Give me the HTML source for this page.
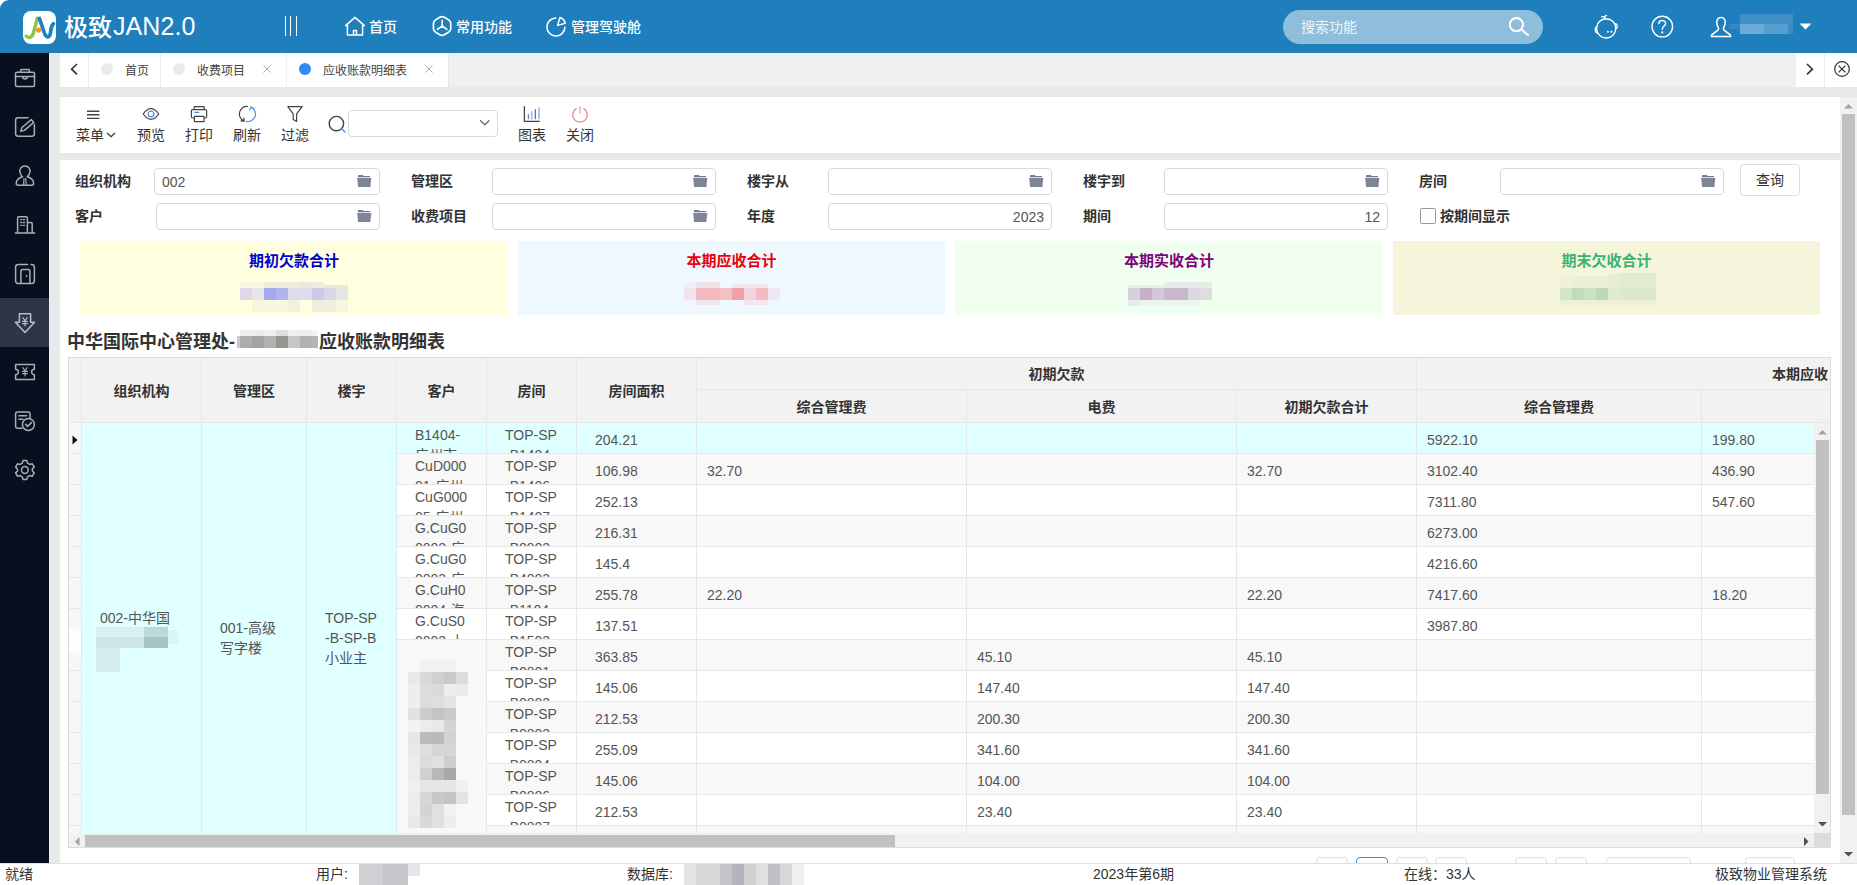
<!DOCTYPE html>
<html lang="zh-CN">
<head>
<meta charset="utf-8">
<title>应收账款明细表</title>
<style>
*{box-sizing:border-box;margin:0;padding:0}
html,body{width:1857px;height:885px;overflow:hidden;background:#fff}
body{font-family:"Liberation Sans","Noto Sans CJK SC",sans-serif;font-size:14px;color:#333;position:relative;line-height:1}
.a{position:absolute}
svg{display:block;overflow:visible}
i{font-style:normal}
/* header */
#hd{left:0;top:0;width:1857px;height:53px;background:#1f7ebc;border-top-left-radius:9px}
#logo{left:23px;top:11px;width:33px;height:33px;background:#fff;border-radius:8px;overflow:hidden}
#brand{left:64px;top:11px;font-size:24px;line-height:32px;color:#fff;white-space:nowrap;font-weight:500}
#brand span{font-size:25px;letter-spacing:.1px;position:relative;top:-1px;margin-left:1px}
.nav{top:0;height:54px;line-height:54px;color:#fff;font-size:14px;white-space:nowrap;font-weight:500}
#srch{left:1283px;top:10px;width:260px;height:34px;border-radius:17px;background:#8fbedd}
#srch span{left:18px;top:0;line-height:34px;font-size:14px;color:#eef5fa}
/* sidebar */
#sb{left:0;top:53px;width:49px;height:810px;background:#08101f}
#sb .act{left:0;top:245px;width:49px;height:49px;background:#2d3648}
#sb svg{position:absolute;left:14px}
/* main bg */
#bg{left:49px;top:53px;width:1808px;height:810px;background:#e8eaea}
#tabrow{left:60px;top:53px;width:1797px;height:34px;background:#f0f0f0}
.tab{top:0;height:34px;background:#fff;border-right:1px solid #eee;font-size:12px;line-height:36px;color:#444;white-space:nowrap}
.dot{top:10px;width:12px;height:12px;border-radius:50%;background:#e8eaec}
/* toolbar */
#tb{left:60px;top:97px;width:1780px;height:56px;background:#fff}
.tbi{top:31px;width:48px;text-align:center;font-size:14px;line-height:14px;color:#333;white-space:nowrap}
/* filter */
#pn{left:60px;top:160px;width:1780px;height:703px;background:#fff;overflow:hidden}
.lb{font-weight:bold;font-size:14px;line-height:20px;color:#333;white-space:nowrap}
.ip{height:27px;border:1px solid #d9d9d9;border-radius:4px;background:#fff;font-size:14px;line-height:27px;color:#555;padding:0 7px}
.fd{position:absolute;right:7px;top:6px}
.sum{top:81px;height:74px;text-align:center}
.sum b{display:block;margin-top:11px;font-size:15px;line-height:18px}
.mz{position:absolute}
/* grid */
#gr{left:8px;top:197px;width:1763px;height:491px;border:1px solid #dcdcdc;background:#fff;overflow:hidden}
.th{background:#f2f2f2;border-right:1px solid #e7e7e7;border-bottom:1px solid #e7e7e7;font-weight:bold;font-size:14px;color:#333;text-align:center;white-space:nowrap;overflow:hidden}
.r{left:0;width:1746px;height:31px;border-bottom:1px solid #e7e7e7}
.c{top:0;height:30px;border-right:1px solid #e7e7e7;font-size:14px;color:#555;overflow:hidden;white-space:nowrap}
.c.n{padding:7px 0 0 10px;line-height:20px}
.c.w{padding:2px 18px 0 18px;line-height:20px;white-space:normal;word-break:break-all;text-align:left}
.mg{background:#e0ffff;border-right:1px solid #d6ecec;font-size:14px;color:#555;line-height:20px;padding:0 18px;word-break:break-all}
.pg{top:697px;height:32px;border:1px solid #dcdee2;border-radius:4px;background:#fff}
/* scrollbars */
.trk{background:#f1f1f1}
.thm{background:#c1c1c1}
/* status */
#st{left:0;top:863px;width:1857px;height:22px;background:#fff;border-top:1px solid #dfe1e4;font-size:14px;line-height:21px;color:#333}
#st span{position:absolute;top:0;white-space:nowrap}
</style>
</head>
<body>
<div id="hd" class="a">
  <div id="logo" class="a"><svg width="33" height="33" viewBox="0 0 33 33" fill="none" stroke-linecap="round" stroke-linejoin="round">
    <path d="M3.2 25.2C6.5 27.6 9.2 26.4 10.6 21.5L14.4 7.2" stroke="#8dc63f" stroke-width="3.5"/>
    <path d="M16.4 7.4L21.2 21.5C22.8 26.4 25.6 27.2 27.2 23.2C28.2 20 27.2 16 30.4 12.8" stroke="#1b82c5" stroke-width="3.7"/>
    <circle cx="15.7" cy="19.1" r="2.6" fill="#f7941d"/>
  </svg></div>
  <div id="brand" class="a">极致<span>JAN2.0</span></div>
  <div class="a" style="left:285px;top:16px;width:1px;height:20px;background:#fff"></div>
  <div class="a" style="left:290px;top:16px;width:1px;height:20px;background:#fff"></div>
  <div class="a" style="left:296px;top:16px;width:1px;height:20px;background:#fff"></div>
  <div id="srch" class="a"></div>
  <svg class="a" style="left:0;top:0" width="1857" height="53" viewBox="0 0 1857 53" fill="none" stroke="#fff" stroke-width="1.5" stroke-linecap="round" stroke-linejoin="round">
    <!-- home -->
    <path d="M345.6 25.6L355 17.4L364.4 25.6M347.4 24.2V35H362.6V24.2M353.5 35V30.4H356.5V35"/>
    <!-- hexagon -->
    <path d="M439.85 17.30Q442.10 16.00 444.35 17.30L448.51 19.70Q450.76 21.00 450.76 23.60L450.76 28.40Q450.76 31.00 448.51 32.30L444.35 34.70Q442.10 36.00 439.85 34.70L435.69 32.30Q433.44 31.00 433.44 28.40L433.44 23.60Q433.44 21.00 435.69 19.70Z" stroke-width="1.7"/>
    <path d="M442.2 26V20.4M442.2 26L437.4 29.4M442.2 26L447 29.4" stroke-width="1.6"/>
    <!-- pie -->
    <path d="M555.8 18A9 9 0 1 0 564.9 27.4" stroke-width="1.6"/>
    <path d="M557.6 25.4L560 17.5A8.4 8.4 0 0 1 565.3 23.2Z" stroke-width="1.5"/>
    <!-- search -->
    <g stroke-width="2"><circle cx="1516.4" cy="24.6" r="6.6"/><path d="M1521.4 29.6L1528 35"/></g>
    <!-- baby -->
    <g stroke-width="1.400"><circle cx="1606.200" cy="28.400" r="9.600"/><path d="M1605.400 18.800C1604.800 17 1603 16.400 1601.600 16.800M1604.400 16.600L1606.400 15.400M1597 26.600C1594.600 27.200 1594.600 32.400 1597.600 33.200M1614.800 23.800C1617.400 23.600 1618.200 27.200 1616 28.600"/></g>
    <circle cx="1607.9" cy="31.8" r="1" fill="#fff" stroke="none"/><circle cx="1611.4" cy="31.8" r="1" fill="#fff" stroke="none"/>
    <!-- help -->
    <circle cx="1662.3" cy="26.6" r="10.3" stroke-width="1.4"/>
    <path d="M1658.9 23.6C1658.9 19.6 1665.6 19.6 1665.6 23.4C1665.6 26 1662.3 26 1662.3 29.2" stroke-width="1.5"/>
    <circle cx="1662.3" cy="32.4" r="1.1" fill="#fff" stroke="none"/>
    <!-- user -->
    <path d="M1721 17.6C1717.6 17.6 1716.4 20.4 1716.8 23.4C1717.2 26 1718.4 27.4 1718.6 28.8C1718.8 31.6 1712 32.4 1711.2 36.4H1730.8C1730 32.4 1723.2 31.6 1723.4 28.8C1723.6 27.4 1724.8 26 1725.2 23.4C1725.6 20.4 1724.4 17.6 1721 17.6Z" stroke-width="1.5"/>
    <path d="M1799.5 23.4H1811.5L1805.5 29.6Z" fill="#fff" stroke="none"/>
  </svg>
  <div class="a nav" style="left:369px">首页</div>
  <div class="a nav" style="left:456px">常用功能</div>
  <div class="a nav" style="left:571px">管理驾驶舱</div>
  <div class="a" style="left:1301px;top:10px;line-height:34px;font-size:14px;color:#eef5fa">搜索功能</div>
  <!-- blurred user name -->
  <i class="mz" style="left:1740px;top:14px;width:53px;height:10px;background:#3f8fc7"></i>
  <i class="mz" style="left:1740px;top:24px;width:24px;height:10px;background:#6babd8"></i>
  <i class="mz" style="left:1764px;top:24px;width:24px;height:10px;background:#559fd1"></i>
  <i class="mz" style="left:1788px;top:24px;width:5px;height:10px;background:#3a8cc5"></i>
  <i class="mz" style="left:1729px;top:24px;width:11px;height:5px;background:#3487c2"></i>
</div>
<div id="sb" class="a"><div class="a act"></div>
<svg style="left:0;top:0" width="49" height="810" viewBox="0 53 49 810" fill="none" stroke="#a9adb5" stroke-width="1.5" stroke-linecap="round" stroke-linejoin="round">
  <!-- briefcase -->
  <rect x="15.5" y="72.2" width="19" height="14.4" rx="1.5"/><path d="M20.6 72V70.6Q20.6 69.6 21.6 69.6H28.4Q29.4 69.6 29.4 70.6V72M15.5 76.4H34.5M22.6 76.6A2.4 2.4 0 0 0 27.4 76.6"/>
  <!-- edit -->
  <path d="M28 117.8H18Q15.6 117.8 15.6 120.2V133.8Q15.6 136.2 18 136.2H32Q34.4 136.2 34.4 133.800V124.500"/>
  <path d="M20.800 131.400L21.800 127.800L31.200 119.600L33.800 122.400L24.400 130.400Z"/>
  <!-- person -->
  <path d="M24.900 166C21.200 166 19.400 169 19.900 172C20.300 174.600 21.800 176.200 22.600 176.800C19.500 177.600 16.400 179.400 16.200 183.200Q16.200 185.200 18 185.200H31.800Q33.600 185.200 33.600 183.200C33.400 179.400 30.300 177.600 27.200 176.800C28 176.200 29.500 174.600 29.900 172C30.400 169 28.600 166 24.900 166Z"/>
  <path d="M24 178.500L23.600 185M25.800 178.500L26.200 185" stroke-width="1.200"/>
  <!-- building -->
  <path d="M15.300 233H34.700M17.600 233V218Q17.600 216.800 18.800 216.800H26.200Q27.400 216.800 27.400 218V233M27.400 222.600H31Q32.200 222.600 32.200 223.800V233"/>
  <path d="M20.700 219.700H21.900M23.400 219.700H24.600M20.700 222.500H21.900M23.400 222.500H24.600M20.700 225.300H21.900M23.400 225.300H24.600" stroke-width="1.300"/>
  <!-- door -->
  <path d="M27.500 264.600H18.200Q15.600 264.600 15.600 267.200V280.800Q15.600 283.400 18.200 283.400H31.800Q34.400 283.400 34.400 280.800V267.200Q34.400 264.600 31.800 264.600H31"/>
  <path d="M20.900 283.400V271.400Q20.900 269.500 22.800 269.500H28Q29.900 269.500 29.900 271.400V283.400"/>
  <circle cx="26.600" cy="276" r=".9" fill="#a9adb5" stroke="none"/>
  <!-- arrow yen (active) -->
  <g stroke="#b9bdc6"><path d="M19.400 313.800H30.600V322.200H34.600L25 332.400L15.400 322.200H19.400Z"/>
  <path d="M22.800 317.600L25 320.600L27.200 317.600M25 320.600V326M22.600 321.400H27.400M22.600 323.600H27.400" stroke-width="1.100"/></g>
  <!-- ticket -->
  <path d="M15.600 364.600H34.400V369.200A2.800 2.800 0 0 0 34.400 374.800V379.400H15.600V374.800A2.800 2.800 0 0 0 15.600 369.200Z"/>
  <path d="M22.800 367.600L25 370.600L27.200 367.600M25 370.600V376M22.600 371.400H27.400M22.600 373.600H27.400" stroke-width="1.100"/>
  <!-- doc check -->
  <path d="M22 428.300H17.600Q15.600 428.300 15.600 426.300V414Q15.600 412 17.600 412H28Q30 412 30 414V417.500M19 415.800H26.600M19 419.200H23"/>
  <circle cx="28.400" cy="424.400" r="6"/><path d="M25.600 424.400L27.600 426.400L31.400 422.600"/>
  <!-- gear -->
  <circle cx="24.900" cy="470" r="3.400"/>
  <path d="M23 460.600H26.800L27.600 463.200L29.600 464.400L32.300 463.800L34.200 467.100L32.300 469.100V471L34.200 472.900L32.300 476.200L29.600 475.600L27.600 476.800L26.800 479.400H23L22.200 476.800L20.200 475.600L17.500 476.200L15.600 472.900L17.500 471V469.100L15.600 467.100L17.500 463.800L20.200 464.400L22.200 463.200Z"/>
</svg>
</div>
<div id="bg" class="a"></div>
<div id="tabrow" class="a">
  <div class="a tab" style="left:0;width:29px"></div>
  <div class="a tab" style="left:29px;width:72px"><i class="a dot" style="left:12px"></i><span class="a" style="left:36px">首页</span></div>
  <div class="a tab" style="left:101px;width:126px"><i class="a dot" style="left:12px"></i><span class="a" style="left:36px">收费项目</span></div>
  <div class="a tab" style="left:227px;width:162px;border-right:1px solid #e4e6e6"><i class="a dot" style="left:12px;background:#2d8cf0"></i><span class="a" style="left:36px">应收账款明细表</span></div>
  <div class="a tab" style="left:1736px;width:29px;border-right:1px solid #eee"></div>
  <div class="a tab" style="left:1765px;width:32px;border-right:0"></div>
  <svg class="a" style="left:0;top:0" width="1797" height="34" viewBox="60 53 1797 34" fill="none" stroke="#333" stroke-width="1.6" stroke-linecap="butt" stroke-linejoin="miter">
    <path d="M77 64L71.600 69.200L77 74.400"/>
    <path d="M1807 64L1812.400 69.200L1807 74.400"/>
    <circle cx="1842" cy="69" r="7.300" stroke-width="1.200"/>
    <path d="M1838.600 65.600L1845.400 72.400M1845.400 65.600L1838.600 72.400" stroke-width="1.200"/>
    <g stroke="#aaa" stroke-width="1"><path d="M263.500 65.500L270.500 72.500M270.500 65.500L263.500 72.500M425.500 65.500L432.500 72.500M432.500 65.500L425.500 72.500"/></g>
  </svg>
</div>
<div id="tb" class="a">
  <div class="a tbi" style="left:10px;width:48px;text-align:left;padding-left:6px">菜单</div>
  <div class="a tbi" style="left:67px">预览</div>
  <div class="a tbi" style="left:115px">打印</div>
  <div class="a tbi" style="left:163px">刷新</div>
  <div class="a tbi" style="left:211px">过滤</div>
  <div class="a" style="left:288px;top:13px;width:150px;height:27px;border:1px solid #d9d9d9;border-radius:4px"></div>
  <div class="a tbi" style="left:448px">图表</div>
  <div class="a tbi" style="left:496px">关闭</div>
  <svg class="a" style="left:0;top:0" width="1780" height="56" viewBox="60 97 1780 56" fill="none" stroke="#444" stroke-width="1.200" stroke-linecap="round" stroke-linejoin="round">
    <path d="M87 111.300H99.400M87 114.800H99.400M87 118.400H99.400" stroke-width="1.400" stroke-linecap="butt"/>
    <path d="M107.400 133.200L111 136.800L114.600 133.200" stroke-width="1.300"/>
    <!-- eye -->
    <path d="M143.200 114C146 110.200 148.600 108.700 151 108.700C153.400 108.700 156 110.200 158.800 114C156 117.800 153.400 119.300 151 119.300C148.600 119.300 146 117.800 143.200 114Z"/>
    <circle cx="151" cy="114" r="2.900" stroke="#4a8fe8"/>
    <!-- printer -->
    <path d="M194.200 109.600V106.600H204.200V109.600M194.400 118H192.600Q191.400 118 191.400 116.800V110.800Q191.400 109.600 192.600 109.600H205.400Q206.600 109.600 206.600 110.800V116.800Q206.600 118 205.400 118H204M194.400 116.400H204V121.600H194.400Z"/>
    <path d="M194.800 112.300H198.800" stroke="#4a8fe8"/>
    <!-- refresh -->
    <path d="M247.600 106.500A7.500 7.500 0 0 0 243.800 120.800M243.800 118L244.200 121.200L241 120.800"/>
    <path d="M246.400 121.400A7.500 7.500 0 0 0 251 107.200M249.600 110L251 106.900L254 108.800" stroke="#4a8fe8"/>
    <!-- filter -->
    <path d="M287.800 106.700H302.200L296.600 113.800V121.400L293.200 119.400V113.800Z"/>
    <!-- search -->
    <circle cx="336.400" cy="123.600" r="7.200" stroke-width="1.400"/>
    <path d="M341.600 128.800L345 132" stroke="#4a8fe8" stroke-width="1.400"/>
    <path d="M480.600 120.800L484.800 124.800L489 120.800" stroke="#666" stroke-width="1.300"/>
    <!-- chart -->
    <path d="M524.400 106.300V121.300H539.800" stroke-width="1.300" stroke-linecap="butt"/>
    <path d="M528.400 114.200V119.200" stroke="#5b85c9" stroke-width="1.300" stroke-linecap="butt"/>
    <path d="M531.800 111.200V119.200" stroke="#8aabe0" stroke-width="1.300" stroke-linecap="butt"/>
    <path d="M535.400 109.200V119.200" stroke="#4c78be" stroke-width="1.300" stroke-linecap="butt"/>
    <path d="M539 107.400V119.200" stroke="#8db4f0" stroke-width="1.500" stroke-linecap="butt"/>
    <!-- power -->
    <path d="M576.200 108.600A7.300 7.300 0 1 0 583.800 108.600" stroke="#ea8a8a" stroke-width="1.300"/>
    <path d="M580 106.300V113.600" stroke="#f0adad" stroke-width="1.500" stroke-linecap="butt"/>
  </svg>
</div>
<div id="pn" class="a">
<div class="a lb" style="left:15px;top:11px">组织机构</div>
<div class="a lb" style="left:351px;top:11px">管理区</div>
<div class="a lb" style="left:687px;top:11px">楼宇从</div>
<div class="a lb" style="left:1023px;top:11px">楼宇到</div>
<div class="a lb" style="left:1359px;top:11px">房间</div>
<div class="a lb" style="left:15px;top:46px">客户</div>
<div class="a lb" style="left:351px;top:46px">收费项目</div>
<div class="a lb" style="left:687px;top:46px">年度</div>
<div class="a lb" style="left:1023px;top:46px">期间</div>
<div class="a ip" style="left:94px;top:8px;width:226px">002<svg class="fd" width="15" height="13" viewBox="0 0 15 13"><path d="M1 0.700Q1 0.100 1.600 0.100H5.500Q6.100 0.100 6.300 0.600L6.600 1.100H12.600Q13.200 1.100 13.200 1.700V2.300H1Z" fill="#767a8c"/><path d="M0.200 3.100H14.300L13.400 12.100H1.100Z" fill="#7f8598"/></svg></div>
<div class="a ip" style="left:432px;top:8px;width:224px"><svg class="fd" width="15" height="13" viewBox="0 0 15 13"><path d="M1 0.700Q1 0.100 1.600 0.100H5.500Q6.100 0.100 6.300 0.600L6.600 1.100H12.600Q13.200 1.100 13.200 1.700V2.300H1Z" fill="#767a8c"/><path d="M0.200 3.100H14.300L13.400 12.100H1.100Z" fill="#7f8598"/></svg></div>
<div class="a ip" style="left:768px;top:8px;width:224px"><svg class="fd" width="15" height="13" viewBox="0 0 15 13"><path d="M1 0.700Q1 0.100 1.600 0.100H5.500Q6.100 0.100 6.300 0.600L6.600 1.100H12.600Q13.200 1.100 13.200 1.700V2.300H1Z" fill="#767a8c"/><path d="M0.200 3.100H14.300L13.400 12.100H1.100Z" fill="#7f8598"/></svg></div>
<div class="a ip" style="left:1104px;top:8px;width:224px"><svg class="fd" width="15" height="13" viewBox="0 0 15 13"><path d="M1 0.700Q1 0.100 1.600 0.100H5.500Q6.100 0.100 6.300 0.600L6.600 1.100H12.600Q13.200 1.100 13.200 1.700V2.300H1Z" fill="#767a8c"/><path d="M0.200 3.100H14.300L13.400 12.100H1.100Z" fill="#7f8598"/></svg></div>
<div class="a ip" style="left:1440px;top:8px;width:224px"><svg class="fd" width="15" height="13" viewBox="0 0 15 13"><path d="M1 0.700Q1 0.100 1.600 0.100H5.500Q6.100 0.100 6.300 0.600L6.600 1.100H12.600Q13.200 1.100 13.200 1.700V2.300H1Z" fill="#767a8c"/><path d="M0.200 3.100H14.300L13.400 12.100H1.100Z" fill="#7f8598"/></svg></div>
<div class="a ip" style="left:96px;top:43px;width:224px"><svg class="fd" width="15" height="13" viewBox="0 0 15 13"><path d="M1 0.700Q1 0.100 1.600 0.100H5.500Q6.100 0.100 6.300 0.600L6.600 1.100H12.600Q13.200 1.100 13.200 1.700V2.300H1Z" fill="#767a8c"/><path d="M0.200 3.100H14.300L13.400 12.100H1.100Z" fill="#7f8598"/></svg></div>
<div class="a ip" style="left:432px;top:43px;width:224px"><svg class="fd" width="15" height="13" viewBox="0 0 15 13"><path d="M1 0.700Q1 0.100 1.600 0.100H5.500Q6.100 0.100 6.300 0.600L6.600 1.100H12.600Q13.200 1.100 13.200 1.700V2.300H1Z" fill="#767a8c"/><path d="M0.200 3.100H14.300L13.400 12.100H1.100Z" fill="#7f8598"/></svg></div>
<div class="a ip" style="left:768px;top:43px;width:224px;text-align:right">2023</div>
<div class="a ip" style="left:1104px;top:43px;width:224px;text-align:right">12</div>
<div class="a" style="left:1360px;top:48px;width:16px;height:16px;border:1px solid #999;border-radius:2px;background:#fff"></div>
<div class="a lb" style="left:1380px;top:46px">按期间显示</div>
<div class="a" style="left:1680px;top:4px;width:60px;height:32px;border:1px solid #dcdee2;border-radius:4px;text-align:center;line-height:30px;font-size:14px;color:#333">查询</div>
<div class="a sum" style="left:20px;width:428px;background:#ffffe0"><b style="color:#0000cd">期初欠款合计</b></div>
<div class="a sum" style="left:458px;width:427px;background:#f0f8ff"><b style="color:#e8000c">本期应收合计</b></div>
<div class="a sum" style="left:895px;width:428px;background:#f0fff0"><b style="color:#800080">本期实收合计</b></div>
<div class="a sum" style="left:1333px;width:427px;background:#f5f5dc"><b style="color:#3cb371">期末欠收合计</b></div>
<i class="mz" style="left:180px;top:128px;width:12px;height:12px;background:#e0d8ea"></i>
<i class="mz" style="left:192px;top:128px;width:12px;height:12px;background:#e6e6e8"></i>
<i class="mz" style="left:204px;top:128px;width:12px;height:12px;background:#a4a8ec"></i>
<i class="mz" style="left:216px;top:128px;width:12px;height:12px;background:#b4b4ec"></i>
<i class="mz" style="left:228px;top:128px;width:12px;height:12px;background:#dcdcea"></i>
<i class="mz" style="left:240px;top:128px;width:12px;height:12px;background:#dcdcea"></i>
<i class="mz" style="left:252px;top:128px;width:12px;height:12px;background:#cacaea"></i>
<i class="mz" style="left:264px;top:128px;width:12px;height:12px;background:#d8d8ea"></i>
<i class="mz" style="left:276px;top:128px;width:12px;height:12px;background:#e4e6e6"></i>
<i class="mz" style="left:180px;top:122px;width:24px;height:6px;background:#f8f8e0"></i>
<i class="mz" style="left:204px;top:122px;width:36px;height:6px;background:#eeeedc"></i>
<i class="mz" style="left:240px;top:122px;width:12px;height:6px;background:#e8e8e0"></i>
<i class="mz" style="left:252px;top:122px;width:12px;height:6px;background:#eeeedc"></i>
<i class="mz" style="left:264px;top:125px;width:24px;height:3px;background:#e8e8dc"></i>
<i class="mz" style="left:192px;top:140px;width:12px;height:12px;background:#f4f6de"></i>
<i class="mz" style="left:204px;top:140px;width:24px;height:12px;background:#f8f8de"></i>
<i class="mz" style="left:228px;top:140px;width:12px;height:12px;background:#f0f2dc"></i>
<i class="mz" style="left:252px;top:140px;width:24px;height:12px;background:#eeeedc"></i>
<i class="mz" style="left:276px;top:140px;width:12px;height:12px;background:#f6f6de"></i>
<i class="mz" style="left:624px;top:128px;width:12px;height:12px;background:#f2e4ea"></i>
<i class="mz" style="left:636px;top:128px;width:12px;height:12px;background:#f4b8c0"></i>
<i class="mz" style="left:648px;top:128px;width:12px;height:12px;background:#f4b8c0"></i>
<i class="mz" style="left:660px;top:128px;width:12px;height:12px;background:#f4c0c6"></i>
<i class="mz" style="left:672px;top:128px;width:12px;height:12px;background:#f4a0a8"></i>
<i class="mz" style="left:684px;top:128px;width:12px;height:12px;background:#f2d4dc"></i>
<i class="mz" style="left:696px;top:128px;width:12px;height:12px;background:#f2bcc0"></i>
<i class="mz" style="left:708px;top:128px;width:12px;height:12px;background:#eee8f4"></i>
<i class="mz" style="left:624px;top:122px;width:12px;height:6px;background:#f2ecf4"></i>
<i class="mz" style="left:636px;top:122px;width:24px;height:6px;background:#f0e4ea"></i>
<i class="mz" style="left:672px;top:124px;width:36px;height:4px;background:#f2e6ea"></i>
<i class="mz" style="left:636px;top:140px;width:24px;height:5px;background:#eee8f0"></i>
<i class="mz" style="left:684px;top:140px;width:24px;height:5px;background:#f0e8ee"></i>
<i class="mz" style="left:1068px;top:128px;width:12px;height:12px;background:#d8d0dc"></i>
<i class="mz" style="left:1080px;top:128px;width:12px;height:12px;background:#c8b0c8"></i>
<i class="mz" style="left:1092px;top:128px;width:12px;height:12px;background:#d4c8d8"></i>
<i class="mz" style="left:1104px;top:128px;width:12px;height:12px;background:#ccb8cc"></i>
<i class="mz" style="left:1116px;top:128px;width:12px;height:12px;background:#c8b8cc"></i>
<i class="mz" style="left:1128px;top:128px;width:12px;height:12px;background:#dcd8e0"></i>
<i class="mz" style="left:1140px;top:128px;width:12px;height:12px;background:#e0dce0"></i>
<i class="mz" style="left:1104px;top:122px;width:48px;height:6px;background:#e8ece8"></i>
<i class="mz" style="left:1068px;top:125px;width:36px;height:3px;background:#e8eee8"></i>
<i class="mz" style="left:1068px;top:140px;width:12px;height:6px;background:#e8ece8"></i>
<i class="mz" style="left:1080px;top:140px;width:60px;height:6px;background:#ecf4ec"></i>
<i class="mz" style="left:1500px;top:128px;width:12px;height:12px;background:#d4e6c8"></i>
<i class="mz" style="left:1512px;top:128px;width:12px;height:12px;background:#c0dcbc"></i>
<i class="mz" style="left:1524px;top:128px;width:12px;height:12px;background:#cce2c4"></i>
<i class="mz" style="left:1536px;top:128px;width:12px;height:12px;background:#bcdab8"></i>
<i class="mz" style="left:1548px;top:128px;width:12px;height:12px;background:#e0eacc"></i>
<i class="mz" style="left:1560px;top:128px;width:12px;height:12px;background:#dce8cc"></i>
<i class="mz" style="left:1572px;top:128px;width:12px;height:12px;background:#dce8cc"></i>
<i class="mz" style="left:1584px;top:128px;width:12px;height:12px;background:#dce8cc"></i>
<i class="mz" style="left:1500px;top:116px;width:12px;height:12px;background:#f0f2d8"></i>
<i class="mz" style="left:1512px;top:116px;width:36px;height:12px;background:#eaf0d4"></i>
<i class="mz" style="left:1548px;top:114px;width:12px;height:14px;background:#e8eed2"></i>
<i class="mz" style="left:1560px;top:113px;width:36px;height:15px;background:#e2ebd1"></i>
<i class="mz" style="left:1500px;top:140px;width:96px;height:5px;background:#eef0d6"></i>

<div class="a" style="left:7px;top:170px;font-size:18px;line-height:24px;font-weight:bold;color:#333;white-space:nowrap">中华国际中心管理处-<span style="display:inline-block;width:84px"></span>应收账款明细表</div>
<i class="mz" style="left:177px;top:176px;width:3px;height:12px;background:#cacace"></i>
<i class="mz" style="left:180px;top:176px;width:12px;height:12px;background:#acacac"></i>
<i class="mz" style="left:192px;top:176px;width:12px;height:12px;background:#a4a2a2"></i>
<i class="mz" style="left:204px;top:176px;width:12px;height:12px;background:#b2b2b6"></i>
<i class="mz" style="left:216px;top:176px;width:12px;height:12px;background:#989490"></i>
<i class="mz" style="left:228px;top:176px;width:12px;height:12px;background:#c8c6c2"></i>
<i class="mz" style="left:240px;top:176px;width:12px;height:12px;background:#b2b2b4"></i>
<i class="mz" style="left:252px;top:176px;width:6px;height:12px;background:#b6b6ba"></i>
<i class="mz" style="left:180px;top:170px;width:12px;height:6px;background:#ededed"></i>
<i class="mz" style="left:192px;top:170px;width:12px;height:6px;background:#ebebeb"></i>
<i class="mz" style="left:204px;top:170px;width:12px;height:6px;background:#efefef"></i>
<i class="mz" style="left:216px;top:170px;width:12px;height:6px;background:#e0dfde"></i>
<i class="mz" style="left:228px;top:170px;width:12px;height:6px;background:#efefef"></i>
<i class="mz" style="left:240px;top:170px;width:12px;height:6px;background:#ecedee"></i>
<i class="mz" style="left:252px;top:170px;width:6px;height:6px;background:#f4f4f4"></i>

<div id="gr" class="a">
<div class="a th" style="left:0px;top:0px;width:13px;height:65px;line-height:66px"></div>
<div class="a th" style="left:13px;top:0px;width:120px;height:65px;line-height:66px">组织机构</div>
<div class="a th" style="left:133px;top:0px;width:105px;height:65px;line-height:66px">管理区</div>
<div class="a th" style="left:238px;top:0px;width:90px;height:65px;line-height:66px">楼宇</div>
<div class="a th" style="left:328px;top:0px;width:90px;height:65px;line-height:66px">客户</div>
<div class="a th" style="left:418px;top:0px;width:90px;height:65px;line-height:66px">房间</div>
<div class="a th" style="left:508px;top:0px;width:120px;height:65px;line-height:66px">房间面积</div>
<div class="a th" style="left:628px;top:0px;width:720px;height:32px;line-height:33px">初期欠款</div>
<div class="a th" style="left:628px;top:32px;width:270px;height:33px;line-height:34px">综合管理费</div>
<div class="a th" style="left:898px;top:32px;width:270px;height:33px;line-height:34px">电费</div>
<div class="a th" style="left:1168px;top:32px;width:180px;height:33px;line-height:34px">初期欠款合计</div>
<div class="a th" style="left:1348px;top:0px;width:414px;height:32px;line-height:33px"></div>
<div class="a th" style="left:1348px;top:32px;width:285px;height:33px;line-height:34px">综合管理费</div>
<div class="a th" style="left:1633px;top:32px;width:129px;height:33px;line-height:34px"></div>
<div class="a" style="left:1703px;top:0;height:32px;line-height:33px;font-weight:bold;font-size:14px;color:#333;white-space:nowrap">本期应收</div>
<div class="a r" style="top:65px;background:#e0ffff">
<div class="a c" style="left:0;width:13px;background:#f7f7f7"></div>
<div class="a c w" style="left:328px;width:90px">B1404-广州市</div>
<div class="a c w" style="left:418px;width:90px">TOP-SP-B1404</div>
<div class="a c n" style="left:508px;width:120px;padding-left:18px">204.21</div>
<div class="a c n" style="left:628px;width:270px;padding-left:10px"></div>
<div class="a c n" style="left:898px;width:270px;padding-left:10px"></div>
<div class="a c n" style="left:1168px;width:180px;padding-left:10px"></div>
<div class="a c n" style="left:1348px;width:285px;padding-left:10px">5922.10</div>
<div class="a c n" style="left:1633px;width:113px;padding-left:10px;border-right:0">199.80</div>
</div>
<div class="a r" style="top:96px;background:#f8f8f8">
<div class="a c" style="left:0;width:13px;background:#f7f7f7"></div>
<div class="a c w" style="left:328px;width:90px">CuD00001-广州</div>
<div class="a c w" style="left:418px;width:90px">TOP-SP-B1406</div>
<div class="a c n" style="left:508px;width:120px;padding-left:18px">106.98</div>
<div class="a c n" style="left:628px;width:270px;padding-left:10px">32.70</div>
<div class="a c n" style="left:898px;width:270px;padding-left:10px"></div>
<div class="a c n" style="left:1168px;width:180px;padding-left:10px">32.70</div>
<div class="a c n" style="left:1348px;width:285px;padding-left:10px">3102.40</div>
<div class="a c n" style="left:1633px;width:113px;padding-left:10px;border-right:0">436.90</div>
</div>
<div class="a r" style="top:127px;background:#fff">
<div class="a c" style="left:0;width:13px;background:#f7f7f7"></div>
<div class="a c w" style="left:328px;width:90px">CuG00005-广州</div>
<div class="a c w" style="left:418px;width:90px">TOP-SP-B1407</div>
<div class="a c n" style="left:508px;width:120px;padding-left:18px">252.13</div>
<div class="a c n" style="left:628px;width:270px;padding-left:10px"></div>
<div class="a c n" style="left:898px;width:270px;padding-left:10px"></div>
<div class="a c n" style="left:1168px;width:180px;padding-left:10px"></div>
<div class="a c n" style="left:1348px;width:285px;padding-left:10px">7311.80</div>
<div class="a c n" style="left:1633px;width:113px;padding-left:10px;border-right:0">547.60</div>
</div>
<div class="a r" style="top:158px;background:#f8f8f8">
<div class="a c" style="left:0;width:13px;background:#f7f7f7"></div>
<div class="a c w" style="left:328px;width:90px">G.CuG00002-广</div>
<div class="a c w" style="left:418px;width:90px">TOP-SP-B0903</div>
<div class="a c n" style="left:508px;width:120px;padding-left:18px">216.31</div>
<div class="a c n" style="left:628px;width:270px;padding-left:10px"></div>
<div class="a c n" style="left:898px;width:270px;padding-left:10px"></div>
<div class="a c n" style="left:1168px;width:180px;padding-left:10px"></div>
<div class="a c n" style="left:1348px;width:285px;padding-left:10px">6273.00</div>
<div class="a c n" style="left:1633px;width:113px;padding-left:10px;border-right:0"></div>
</div>
<div class="a r" style="top:189px;background:#fff">
<div class="a c" style="left:0;width:13px;background:#f7f7f7"></div>
<div class="a c w" style="left:328px;width:90px">G.CuG00003-广</div>
<div class="a c w" style="left:418px;width:90px">TOP-SP-B4003</div>
<div class="a c n" style="left:508px;width:120px;padding-left:18px">145.4</div>
<div class="a c n" style="left:628px;width:270px;padding-left:10px"></div>
<div class="a c n" style="left:898px;width:270px;padding-left:10px"></div>
<div class="a c n" style="left:1168px;width:180px;padding-left:10px"></div>
<div class="a c n" style="left:1348px;width:285px;padding-left:10px">4216.60</div>
<div class="a c n" style="left:1633px;width:113px;padding-left:10px;border-right:0"></div>
</div>
<div class="a r" style="top:220px;background:#f8f8f8">
<div class="a c" style="left:0;width:13px;background:#f7f7f7"></div>
<div class="a c w" style="left:328px;width:90px">G.CuH00004-海</div>
<div class="a c w" style="left:418px;width:90px">TOP-SP-B1104</div>
<div class="a c n" style="left:508px;width:120px;padding-left:18px">255.78</div>
<div class="a c n" style="left:628px;width:270px;padding-left:10px">22.20</div>
<div class="a c n" style="left:898px;width:270px;padding-left:10px"></div>
<div class="a c n" style="left:1168px;width:180px;padding-left:10px">22.20</div>
<div class="a c n" style="left:1348px;width:285px;padding-left:10px">7417.60</div>
<div class="a c n" style="left:1633px;width:113px;padding-left:10px;border-right:0">18.20</div>
</div>
<div class="a r" style="top:251px;background:#fff">
<div class="a c" style="left:0;width:13px;background:#f7f7f7"></div>
<div class="a c w" style="left:328px;width:90px">G.CuS00003-上</div>
<div class="a c w" style="left:418px;width:90px">TOP-SP-B1503</div>
<div class="a c n" style="left:508px;width:120px;padding-left:18px">137.51</div>
<div class="a c n" style="left:628px;width:270px;padding-left:10px"></div>
<div class="a c n" style="left:898px;width:270px;padding-left:10px"></div>
<div class="a c n" style="left:1168px;width:180px;padding-left:10px"></div>
<div class="a c n" style="left:1348px;width:285px;padding-left:10px">3987.80</div>
<div class="a c n" style="left:1633px;width:113px;padding-left:10px;border-right:0"></div>
</div>
<div class="a r" style="top:282px;background:#f8f8f8">
<div class="a c" style="left:0;width:13px;background:#f7f7f7"></div>
<div class="a c w" style="left:418px;width:90px">TOP-SP-B0801</div>
<div class="a c n" style="left:508px;width:120px;padding-left:18px">363.85</div>
<div class="a c n" style="left:628px;width:270px;padding-left:10px"></div>
<div class="a c n" style="left:898px;width:270px;padding-left:10px">45.10</div>
<div class="a c n" style="left:1168px;width:180px;padding-left:10px">45.10</div>
<div class="a c n" style="left:1348px;width:285px;padding-left:10px"></div>
<div class="a c n" style="left:1633px;width:113px;padding-left:10px;border-right:0"></div>
</div>
<div class="a r" style="top:313px;background:#fff">
<div class="a c" style="left:0;width:13px;background:#f7f7f7"></div>
<div class="a c w" style="left:418px;width:90px">TOP-SP-B0802</div>
<div class="a c n" style="left:508px;width:120px;padding-left:18px">145.06</div>
<div class="a c n" style="left:628px;width:270px;padding-left:10px"></div>
<div class="a c n" style="left:898px;width:270px;padding-left:10px">147.40</div>
<div class="a c n" style="left:1168px;width:180px;padding-left:10px">147.40</div>
<div class="a c n" style="left:1348px;width:285px;padding-left:10px"></div>
<div class="a c n" style="left:1633px;width:113px;padding-left:10px;border-right:0"></div>
</div>
<div class="a r" style="top:344px;background:#f8f8f8">
<div class="a c" style="left:0;width:13px;background:#f7f7f7"></div>
<div class="a c w" style="left:418px;width:90px">TOP-SP-B0803</div>
<div class="a c n" style="left:508px;width:120px;padding-left:18px">212.53</div>
<div class="a c n" style="left:628px;width:270px;padding-left:10px"></div>
<div class="a c n" style="left:898px;width:270px;padding-left:10px">200.30</div>
<div class="a c n" style="left:1168px;width:180px;padding-left:10px">200.30</div>
<div class="a c n" style="left:1348px;width:285px;padding-left:10px"></div>
<div class="a c n" style="left:1633px;width:113px;padding-left:10px;border-right:0"></div>
</div>
<div class="a r" style="top:375px;background:#fff">
<div class="a c" style="left:0;width:13px;background:#f7f7f7"></div>
<div class="a c w" style="left:418px;width:90px">TOP-SP-B0804</div>
<div class="a c n" style="left:508px;width:120px;padding-left:18px">255.09</div>
<div class="a c n" style="left:628px;width:270px;padding-left:10px"></div>
<div class="a c n" style="left:898px;width:270px;padding-left:10px">341.60</div>
<div class="a c n" style="left:1168px;width:180px;padding-left:10px">341.60</div>
<div class="a c n" style="left:1348px;width:285px;padding-left:10px"></div>
<div class="a c n" style="left:1633px;width:113px;padding-left:10px;border-right:0"></div>
</div>
<div class="a r" style="top:406px;background:#f8f8f8">
<div class="a c" style="left:0;width:13px;background:#f7f7f7"></div>
<div class="a c w" style="left:418px;width:90px">TOP-SP-B0806</div>
<div class="a c n" style="left:508px;width:120px;padding-left:18px">145.06</div>
<div class="a c n" style="left:628px;width:270px;padding-left:10px"></div>
<div class="a c n" style="left:898px;width:270px;padding-left:10px">104.00</div>
<div class="a c n" style="left:1168px;width:180px;padding-left:10px">104.00</div>
<div class="a c n" style="left:1348px;width:285px;padding-left:10px"></div>
<div class="a c n" style="left:1633px;width:113px;padding-left:10px;border-right:0"></div>
</div>
<div class="a r" style="top:437px;background:#fff">
<div class="a c" style="left:0;width:13px;background:#f7f7f7"></div>
<div class="a c w" style="left:418px;width:90px">TOP-SP-B0807</div>
<div class="a c n" style="left:508px;width:120px;padding-left:18px">212.53</div>
<div class="a c n" style="left:628px;width:270px;padding-left:10px"></div>
<div class="a c n" style="left:898px;width:270px;padding-left:10px">23.40</div>
<div class="a c n" style="left:1168px;width:180px;padding-left:10px">23.40</div>
<div class="a c n" style="left:1348px;width:285px;padding-left:10px"></div>
<div class="a c n" style="left:1633px;width:113px;padding-left:10px;border-right:0"></div>
</div>
<div class="a r" style="top:468px;background:#f8f8f8">
<div class="a c" style="left:0;width:13px;background:#f7f7f7"></div>
<div class="a c w" style="left:418px;width:90px">TOP-SP-B0808</div>
<div class="a c n" style="left:508px;width:120px;padding-left:18px"></div>
<div class="a c n" style="left:628px;width:270px;padding-left:10px"></div>
<div class="a c n" style="left:898px;width:270px;padding-left:10px"></div>
<div class="a c n" style="left:1168px;width:180px;padding-left:10px"></div>
<div class="a c n" style="left:1348px;width:285px;padding-left:10px"></div>
<div class="a c n" style="left:1633px;width:113px;padding-left:10px;border-right:0"></div>
</div>
<div class="a mg" style="left:13px;top:65px;width:120px;height:434px;padding-top:185px">002-中华国</div>
<div class="a mg" style="left:133px;top:65px;width:105px;height:434px;padding-top:195px">001-高级写字楼</div>
<div class="a mg" style="left:238px;top:65px;width:90px;height:434px;padding-top:185px">TOP-SP-B-SP-B小业主</div>
<div class="a" style="left:328px;top:282px;width:90px;height:217px;background:#f8f8f8;border-right:1px solid #e7e7e7"></div>
<i class="mz" style="left:339px;top:314px;width:12px;height:12px;background:#e8e8e8"></i>
<i class="mz" style="left:351px;top:314px;width:12px;height:12px;background:#d8d8d8"></i>
<i class="mz" style="left:363px;top:314px;width:12px;height:12px;background:#d0d0d0"></i>
<i class="mz" style="left:375px;top:314px;width:12px;height:12px;background:#cacaca"></i>
<i class="mz" style="left:387px;top:314px;width:12px;height:12px;background:#dcdcdc"></i>
<i class="mz" style="left:339px;top:326px;width:12px;height:12px;background:#eeeeee"></i>
<i class="mz" style="left:351px;top:326px;width:12px;height:12px;background:#dcdcdc"></i>
<i class="mz" style="left:363px;top:326px;width:12px;height:12px;background:#dadada"></i>
<i class="mz" style="left:375px;top:326px;width:12px;height:12px;background:#eeeeee"></i>
<i class="mz" style="left:387px;top:326px;width:12px;height:12px;background:#eaeaea"></i>
<i class="mz" style="left:339px;top:338px;width:12px;height:12px;background:#eeeeee"></i>
<i class="mz" style="left:351px;top:338px;width:12px;height:12px;background:#dcdcdc"></i>
<i class="mz" style="left:363px;top:338px;width:12px;height:12px;background:#dedede"></i>
<i class="mz" style="left:375px;top:338px;width:12px;height:12px;background:#e4e4e4"></i>
<i class="mz" style="left:339px;top:350px;width:12px;height:12px;background:#e2e2e2"></i>
<i class="mz" style="left:351px;top:350px;width:12px;height:12px;background:#cccccc"></i>
<i class="mz" style="left:363px;top:350px;width:12px;height:12px;background:#c4c4c4"></i>
<i class="mz" style="left:375px;top:350px;width:12px;height:12px;background:#cacaca"></i>
<i class="mz" style="left:339px;top:362px;width:12px;height:12px;background:#f2f2f2"></i>
<i class="mz" style="left:351px;top:362px;width:12px;height:12px;background:#ececec"></i>
<i class="mz" style="left:363px;top:362px;width:12px;height:12px;background:#e8e8e8"></i>
<i class="mz" style="left:375px;top:362px;width:12px;height:12px;background:#d4d4d4"></i>
<i class="mz" style="left:339px;top:374px;width:12px;height:12px;background:#e6e6e6"></i>
<i class="mz" style="left:351px;top:374px;width:12px;height:12px;background:#bcbcbc"></i>
<i class="mz" style="left:363px;top:374px;width:12px;height:12px;background:#bababa"></i>
<i class="mz" style="left:375px;top:374px;width:12px;height:12px;background:#d2d2d2"></i>
<i class="mz" style="left:339px;top:386px;width:12px;height:12px;background:#e8e8e8"></i>
<i class="mz" style="left:351px;top:386px;width:12px;height:12px;background:#dedede"></i>
<i class="mz" style="left:363px;top:386px;width:12px;height:12px;background:#d6d6d6"></i>
<i class="mz" style="left:375px;top:386px;width:12px;height:12px;background:#d6d6d6"></i>
<i class="mz" style="left:339px;top:398px;width:12px;height:12px;background:#ececec"></i>
<i class="mz" style="left:351px;top:398px;width:12px;height:12px;background:#dcdcdc"></i>
<i class="mz" style="left:363px;top:398px;width:12px;height:12px;background:#e0e0e0"></i>
<i class="mz" style="left:375px;top:398px;width:12px;height:12px;background:#cecece"></i>
<i class="mz" style="left:339px;top:410px;width:12px;height:12px;background:#ececec"></i>
<i class="mz" style="left:351px;top:410px;width:12px;height:12px;background:#d0d0d0"></i>
<i class="mz" style="left:363px;top:410px;width:12px;height:12px;background:#b8b8b8"></i>
<i class="mz" style="left:375px;top:410px;width:12px;height:12px;background:#a8a8a8"></i>
<i class="mz" style="left:339px;top:422px;width:12px;height:12px;background:#f0f0f0"></i>
<i class="mz" style="left:351px;top:422px;width:12px;height:12px;background:#e6e6e6"></i>
<i class="mz" style="left:363px;top:422px;width:12px;height:12px;background:#e6e6e6"></i>
<i class="mz" style="left:375px;top:422px;width:12px;height:12px;background:#e6e6e6"></i>
<i class="mz" style="left:387px;top:422px;width:12px;height:12px;background:#f0f0f0"></i>
<i class="mz" style="left:339px;top:434px;width:12px;height:12px;background:#ececec"></i>
<i class="mz" style="left:351px;top:434px;width:12px;height:12px;background:#d6d6d6"></i>
<i class="mz" style="left:363px;top:434px;width:12px;height:12px;background:#c8c8c8"></i>
<i class="mz" style="left:375px;top:434px;width:12px;height:12px;background:#c4c4c4"></i>
<i class="mz" style="left:387px;top:434px;width:12px;height:12px;background:#e4e4e4"></i>
<i class="mz" style="left:339px;top:446px;width:12px;height:12px;background:#ececec"></i>
<i class="mz" style="left:351px;top:446px;width:12px;height:12px;background:#d4d4d4"></i>
<i class="mz" style="left:363px;top:446px;width:12px;height:12px;background:#e0e0e0"></i>
<i class="mz" style="left:375px;top:446px;width:12px;height:12px;background:#f2f2f2"></i>
<i class="mz" style="left:339px;top:458px;width:12px;height:12px;background:#e8e8e8"></i>
<i class="mz" style="left:351px;top:458px;width:12px;height:12px;background:#d8d8d8"></i>
<i class="mz" style="left:363px;top:458px;width:12px;height:12px;background:#e0e0e0"></i>
<i class="mz" style="left:375px;top:458px;width:12px;height:12px;background:#eeeeee"></i>
<i class="mz" style="left:351px;top:302px;width:36px;height:12px;background:#f2f2f2"></i>
<i class="mz" style="left:27px;top:269px;width:48px;height:10px;background:#d8f0f0"></i>
<i class="mz" style="left:75px;top:269px;width:24px;height:10px;background:#bcd8d8"></i>
<i class="mz" style="left:27px;top:279px;width:48px;height:11px;background:#cce6e6"></i>
<i class="mz" style="left:75px;top:279px;width:24px;height:11px;background:#a8c4c6"></i>
<i class="mz" style="left:99px;top:272px;width:10px;height:14px;background:#d8f6f6"></i>
<i class="mz" style="left:27px;top:290px;width:24px;height:24px;background:#d4ecec"></i>
<i class="mz" style="left:0px;top:271px;width:12px;height:24px;background:#fdfdfd"></i>

<svg class="a" style="left:3px;top:77px" width="6" height="10" viewBox="0 0 6 10"><path d="M0.500 0.500L5.500 5L0.500 9.500Z" fill="#111"/></svg>
<div class="a trk" style="left:1745px;top:65px;width:16px;height:410px"></div>
<div class="a thm" style="left:1747px;top:82px;width:13px;height:354px"></div>
<svg class="a" style="left:1749px;top:72px" width="9" height="5" viewBox="0 0 9 5"><path d="M0 4.500L4.500 0L9 4.500Z" fill="#a3a3a3"/></svg>
<svg class="a" style="left:1749px;top:464px" width="9" height="5" viewBox="0 0 9 5"><path d="M0 0H9L4.500 4.500Z" fill="#505050"/></svg>
<div class="a trk" style="left:0;top:475px;width:1761px;height:15px"></div>
<div class="a thm" style="left:16px;top:477px;width:810px;height:12px"></div>
<div class="a" style="left:1745px;top:475px;width:17px;height:15px;background:#dcdcdc"></div>
<svg class="a" style="left:6px;top:479px" width="5" height="9" viewBox="0 0 5 9"><path d="M4.500 0V9L0 4.500Z" fill="#a3a3a3"/></svg>
<svg class="a" style="left:1735px;top:479px" width="5" height="9" viewBox="0 0 5 9"><path d="M0 0V9L4.500 4.500Z" fill="#505050"/></svg>
</div>
<div class="a pg" style="left:1256px;width:32px;border-color:#dcdee2"></div>
<div class="a pg" style="left:1296px;width:32px;border-color:#2d8cf0"></div>
<div class="a pg" style="left:1336px;width:32px;border-color:#dcdee2"></div>
<div class="a pg" style="left:1375px;width:32px;border-color:#dcdee2"></div>
<div class="a pg" style="left:1455px;width:32px;border-color:#dcdee2"></div>
<div class="a pg" style="left:1495px;width:32px;border-color:#dcdee2"></div>
<div class="a pg" style="left:1546px;width:85px;border-color:#dcdee2"></div>
<div class="a pg" style="left:1685px;width:50px;border-color:#dcdee2"></div>
</div><!-- page scrollbar -->
<div class="a trk" style="left:1840px;top:97px;width:17px;height:766px"></div>
<div class="a thm" style="left:1842px;top:114px;width:13px;height:701px"></div>
<svg class="a" style="left:1844px;top:104px" width="9" height="5" viewBox="0 0 9 5"><path d="M0 4.500L4.500 0L9 4.500Z" fill="#a3a3a3"/></svg>
<svg class="a" style="left:1844px;top:852px" width="9" height="5" viewBox="0 0 9 5"><path d="M0 0H9L4.500 4.500Z" fill="#505050"/></svg>
<div id="st" class="a">
  <span style="left:5px">就绪</span>
  <span style="left:316px">用户:</span>
  <span style="left:627px">数据库:</span>
  <span style="left:1093px">2023年第6期</span>
  <span style="left:1404px">在线：33人</span>
  <span style="left:1715px">极致物业管理系统</span>
</div>
<i class="mz" style="left:359px;top:864px;width:24px;height:21px;background:#d0d0d4"></i>
<i class="mz" style="left:383px;top:864px;width:25px;height:21px;background:#c8c8cc"></i>
<i class="mz" style="left:408px;top:864px;width:12px;height:12px;background:#e6e6ea"></i>
<i class="mz" style="left:684px;top:864px;width:12px;height:21px;background:#e6e2e2"></i>
<i class="mz" style="left:696px;top:864px;width:24px;height:21px;background:#d8d8d8"></i>
<i class="mz" style="left:720px;top:864px;width:12px;height:21px;background:#c4c4c8"></i>
<i class="mz" style="left:732px;top:864px;width:12px;height:21px;background:#b4b4bc"></i>
<i class="mz" style="left:744px;top:864px;width:12px;height:21px;background:#d0d0d0"></i>
<i class="mz" style="left:756px;top:864px;width:12px;height:21px;background:#e0e0e0"></i>
<i class="mz" style="left:768px;top:864px;width:12px;height:21px;background:#c0c0c8"></i>
<i class="mz" style="left:780px;top:864px;width:12px;height:21px;background:#d8d8dc"></i>
<i class="mz" style="left:792px;top:864px;width:12px;height:21px;background:#f0f0f0"></i>

</body>
</html>
